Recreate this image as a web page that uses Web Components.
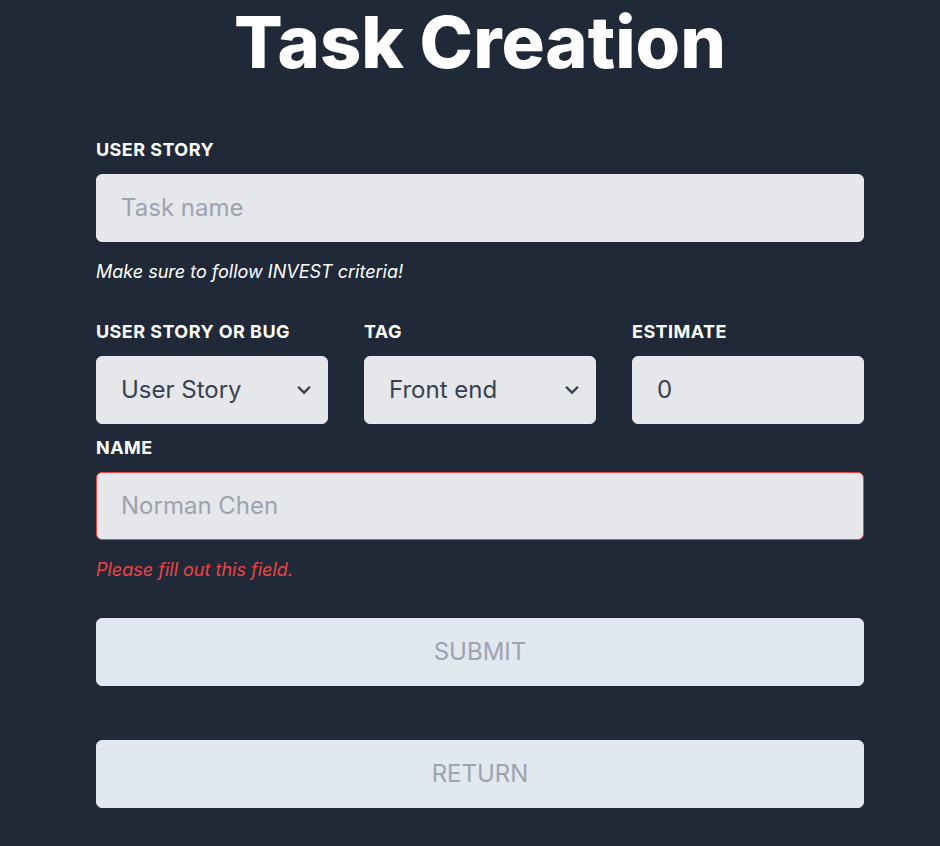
<!DOCTYPE html>
<html lang="en">
<head>
<meta charset="utf-8">
<title>Task Creation</title>
<style>
html{background:#202937}
body{margin:0;background:#202937;color:#fff;font-family:Inter,"Liberation Sans",sans-serif}
</style>
</head>
<body>
<task-page></task-page>
<script>
const control = `
*{box-sizing:border-box}
:host{display:block;min-width:0}
label{display:block;margin-bottom:12px;font-size:18px;line-height:24px;font-weight:700;text-transform:uppercase;letter-spacing:.025em}
.control{display:block;width:100%;margin:0;padding:16px 24px;border:1px solid #e5e7eb;border-radius:6px;background-color:#e5e7eb;color:#374151;font:400 24px/34px Inter,"Liberation Sans",sans-serif;appearance:none;outline:0}
.control::placeholder{color:#9ca3af;opacity:1}
`;
class TextField extends HTMLElement{
  connectedCallback(){
    const bad=this.hasAttribute('invalid');
    this.attachShadow({mode:'open'}).innerHTML=`<style>${control}
      .invalid{border-color:#ef4444}
      ::slotted(p){margin:18px 0 0;font-size:18px;line-height:24px;font-style:italic}
      :host([invalid]) ::slotted(p){color:#ef4444}
    </style>
    <label for="field">${this.getAttribute('label')}</label>
    <input id="field" class="control ${bad?'invalid':''}" type="text" placeholder="${this.getAttribute('placeholder')||''}" value="${this.getAttribute('value')||''}">
    <slot></slot>`;
  }
}
class SelectField extends HTMLElement{
  connectedCallback(){
    const options=this.getAttribute('options').split(',').map(o=>`<option>${o}</option>`).join('');
    this.attachShadow({mode:'open'}).innerHTML=`<style>${control}
      .wrap{display:grid;align-items:center}
      .wrap>*{grid-area:1/1}
      svg{justify-self:end;margin-right:12px;width:24px;height:24px;pointer-events:none;fill:#374151}
    </style>
    <label for="field">${this.getAttribute('label')}</label>
    <div class="wrap"><select id="field" class="control">${options}</select>
    <svg viewBox="0 0 20 20" aria-hidden="true"><path d="M9.293 12.95l.707.707L15.657 8l-1.414-1.414L10 10.828 5.757 6.586 4.343 8z"/></svg></div>`;
  }
}
class ActionButton extends HTMLElement{
  connectedCallback(){
    this.attachShadow({mode:'open'}).innerHTML=`<style>
      :host{display:block}
      button{box-sizing:border-box;display:block;width:100%;margin:0;padding:16px 24px;border:1px solid #e2e8f0;border-radius:6px;background:#e2e8f0;color:#9ca3af;font:400 24px/34px Inter,"Liberation Sans",sans-serif;text-transform:uppercase}
    </style><button type="button"><slot></slot></button>`;
  }
}
class TaskPage extends HTMLElement{
  connectedCallback(){
    this.attachShadow({mode:'open'}).innerHTML=`<style>
      :host{display:block;padding:0 76px 38px 96px}
      h1{margin:0 0 54px;font-size:72px;line-height:84px;font-weight:800;text-align:center}
      form{display:block}
      .row{display:grid;grid-template-columns:repeat(3,minmax(0,1fr));gap:36px;margin:36px 0 12px}
      action-button{margin-top:36px}
      action-button + action-button{margin-top:54px}
    </style>
    <h1>Task Creation</h1>
    <form>
      <text-field label="User Story" placeholder="Task name"><p>Make sure to follow INVEST criteria!</p></text-field>
      <div class="row">
        <select-field label="User Story or Bug" options="User Story,Bug"></select-field>
        <select-field label="Tag" options="Front end,Back end"></select-field>
        <text-field label="Estimate" value="0"></text-field>
      </div>
      <text-field label="Name" placeholder="Norman Chen" invalid><p>Please fill out this field.</p></text-field>
      <action-button>Submit</action-button>
      <action-button>Return</action-button>
    </form>`;
  }
}
customElements.define('text-field',TextField);
customElements.define('select-field',SelectField);
customElements.define('action-button',ActionButton);
customElements.define('task-page',TaskPage);
</script>
</body>
</html>
